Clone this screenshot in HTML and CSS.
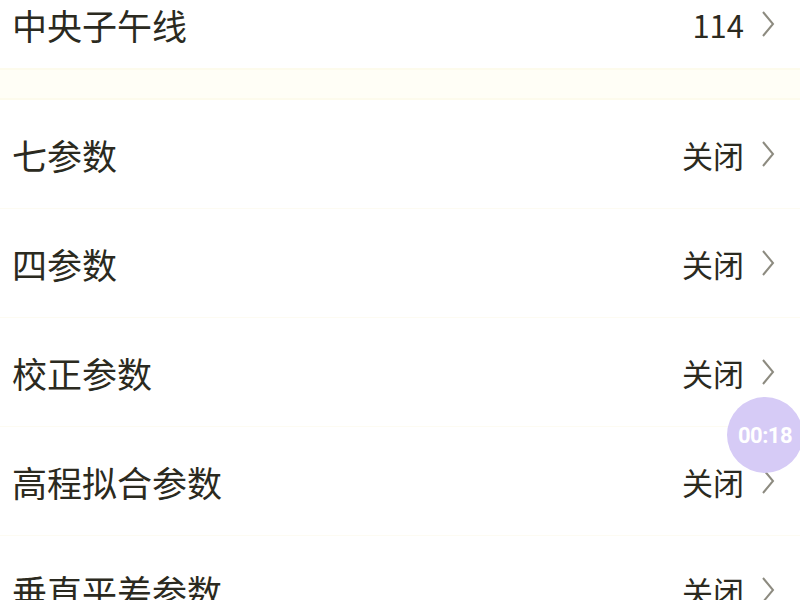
FILE: index.html
```html
<!DOCTYPE html>
<html lang="zh">
<head>
<meta charset="utf-8">
<link rel="stylesheet" href="styles.css">
</head>
<body>
<div class="page">
  <div class="row row-first">
    <span class="label">中央子午线</span>
    <span class="value">114<svg class="chev" viewBox="0 0 14 28"><path d="M2 2 L12 14 L2 26"/></svg></span>
  </div>
  <div class="band"></div>
  <div class="row">
    <span class="label">七参数</span>
    <span class="value">关闭<svg class="chev" viewBox="0 0 14 28"><path d="M2 2 L12 14 L2 26"/></svg></span>
  </div>
  <div class="row">
    <span class="label">四参数</span>
    <span class="value">关闭<svg class="chev" viewBox="0 0 14 28"><path d="M2 2 L12 14 L2 26"/></svg></span>
  </div>
  <div class="row">
    <span class="label">校正参数</span>
    <span class="value">关闭<svg class="chev" viewBox="0 0 14 28"><path d="M2 2 L12 14 L2 26"/></svg></span>
  </div>
  <div class="row">
    <span class="label">高程拟合参数</span>
    <span class="value">关闭<svg class="chev" viewBox="0 0 14 28"><path d="M2 2 L12 14 L2 26"/></svg></span>
  </div>
  <div class="row">
    <span class="label">垂直平差参数</span>
    <span class="value">关闭<svg class="chev" viewBox="0 0 14 28"><path d="M2 2 L12 14 L2 26"/></svg></span>
  </div>
  <div class="timer">00:18</div>
</div>
</body>
</html>
```
FILE: styles.css
```css
html, body {
  margin: 0;
  padding: 0;
  background: #ffffff;
  overflow: hidden;
}
body {
  width: 800px;
  height: 600px;
  font-family: "Noto Sans CJK SC", "Noto Sans", sans-serif;
  color: #2b2a20;
}
.page {
  position: relative;
  width: 800px;
  height: 600px;
  overflow: hidden;
}
.row {
  display: flex;
  align-items: center;
  justify-content: space-between;
  height: 109px;
  padding: 0 25px 0 12px;
  box-sizing: border-box;
  border-bottom: 1px solid #fdfbf2;
}
.row-first {
  height: 68px;
  padding-bottom: 20px;
  border-bottom: none;
}
.band {
  height: 32px;
  background: #fffef6;
  border-top: 2px solid #fdfbec;
  border-bottom: 2px solid #fdfbec;
  box-sizing: border-box;
}
.label {
  font-size: 35px;
  line-height: 1;
}
.value {
  display: flex;
  align-items: center;
  font-size: 31px;
  line-height: 1;
  color: #2b2a20;
}
.chev {
  width: 14px;
  height: 28px;
  margin-left: 17px;
}
.chev path {
  fill: none;
  stroke: #8d8b80;
  stroke-width: 2;
}
.timer {
  position: absolute;
  left: 727px;
  top: 397px;
  width: 76px;
  height: 76px;
  border-radius: 50%;
  background: #d6cbf6;
  color: #ffffff;
  font-family: Roboto, "Liberation Sans", sans-serif;
  font-weight: 700;
  font-size: 22px;
  display: flex;
  align-items: center;
  justify-content: center;
  letter-spacing: -0.5px;
}
```
